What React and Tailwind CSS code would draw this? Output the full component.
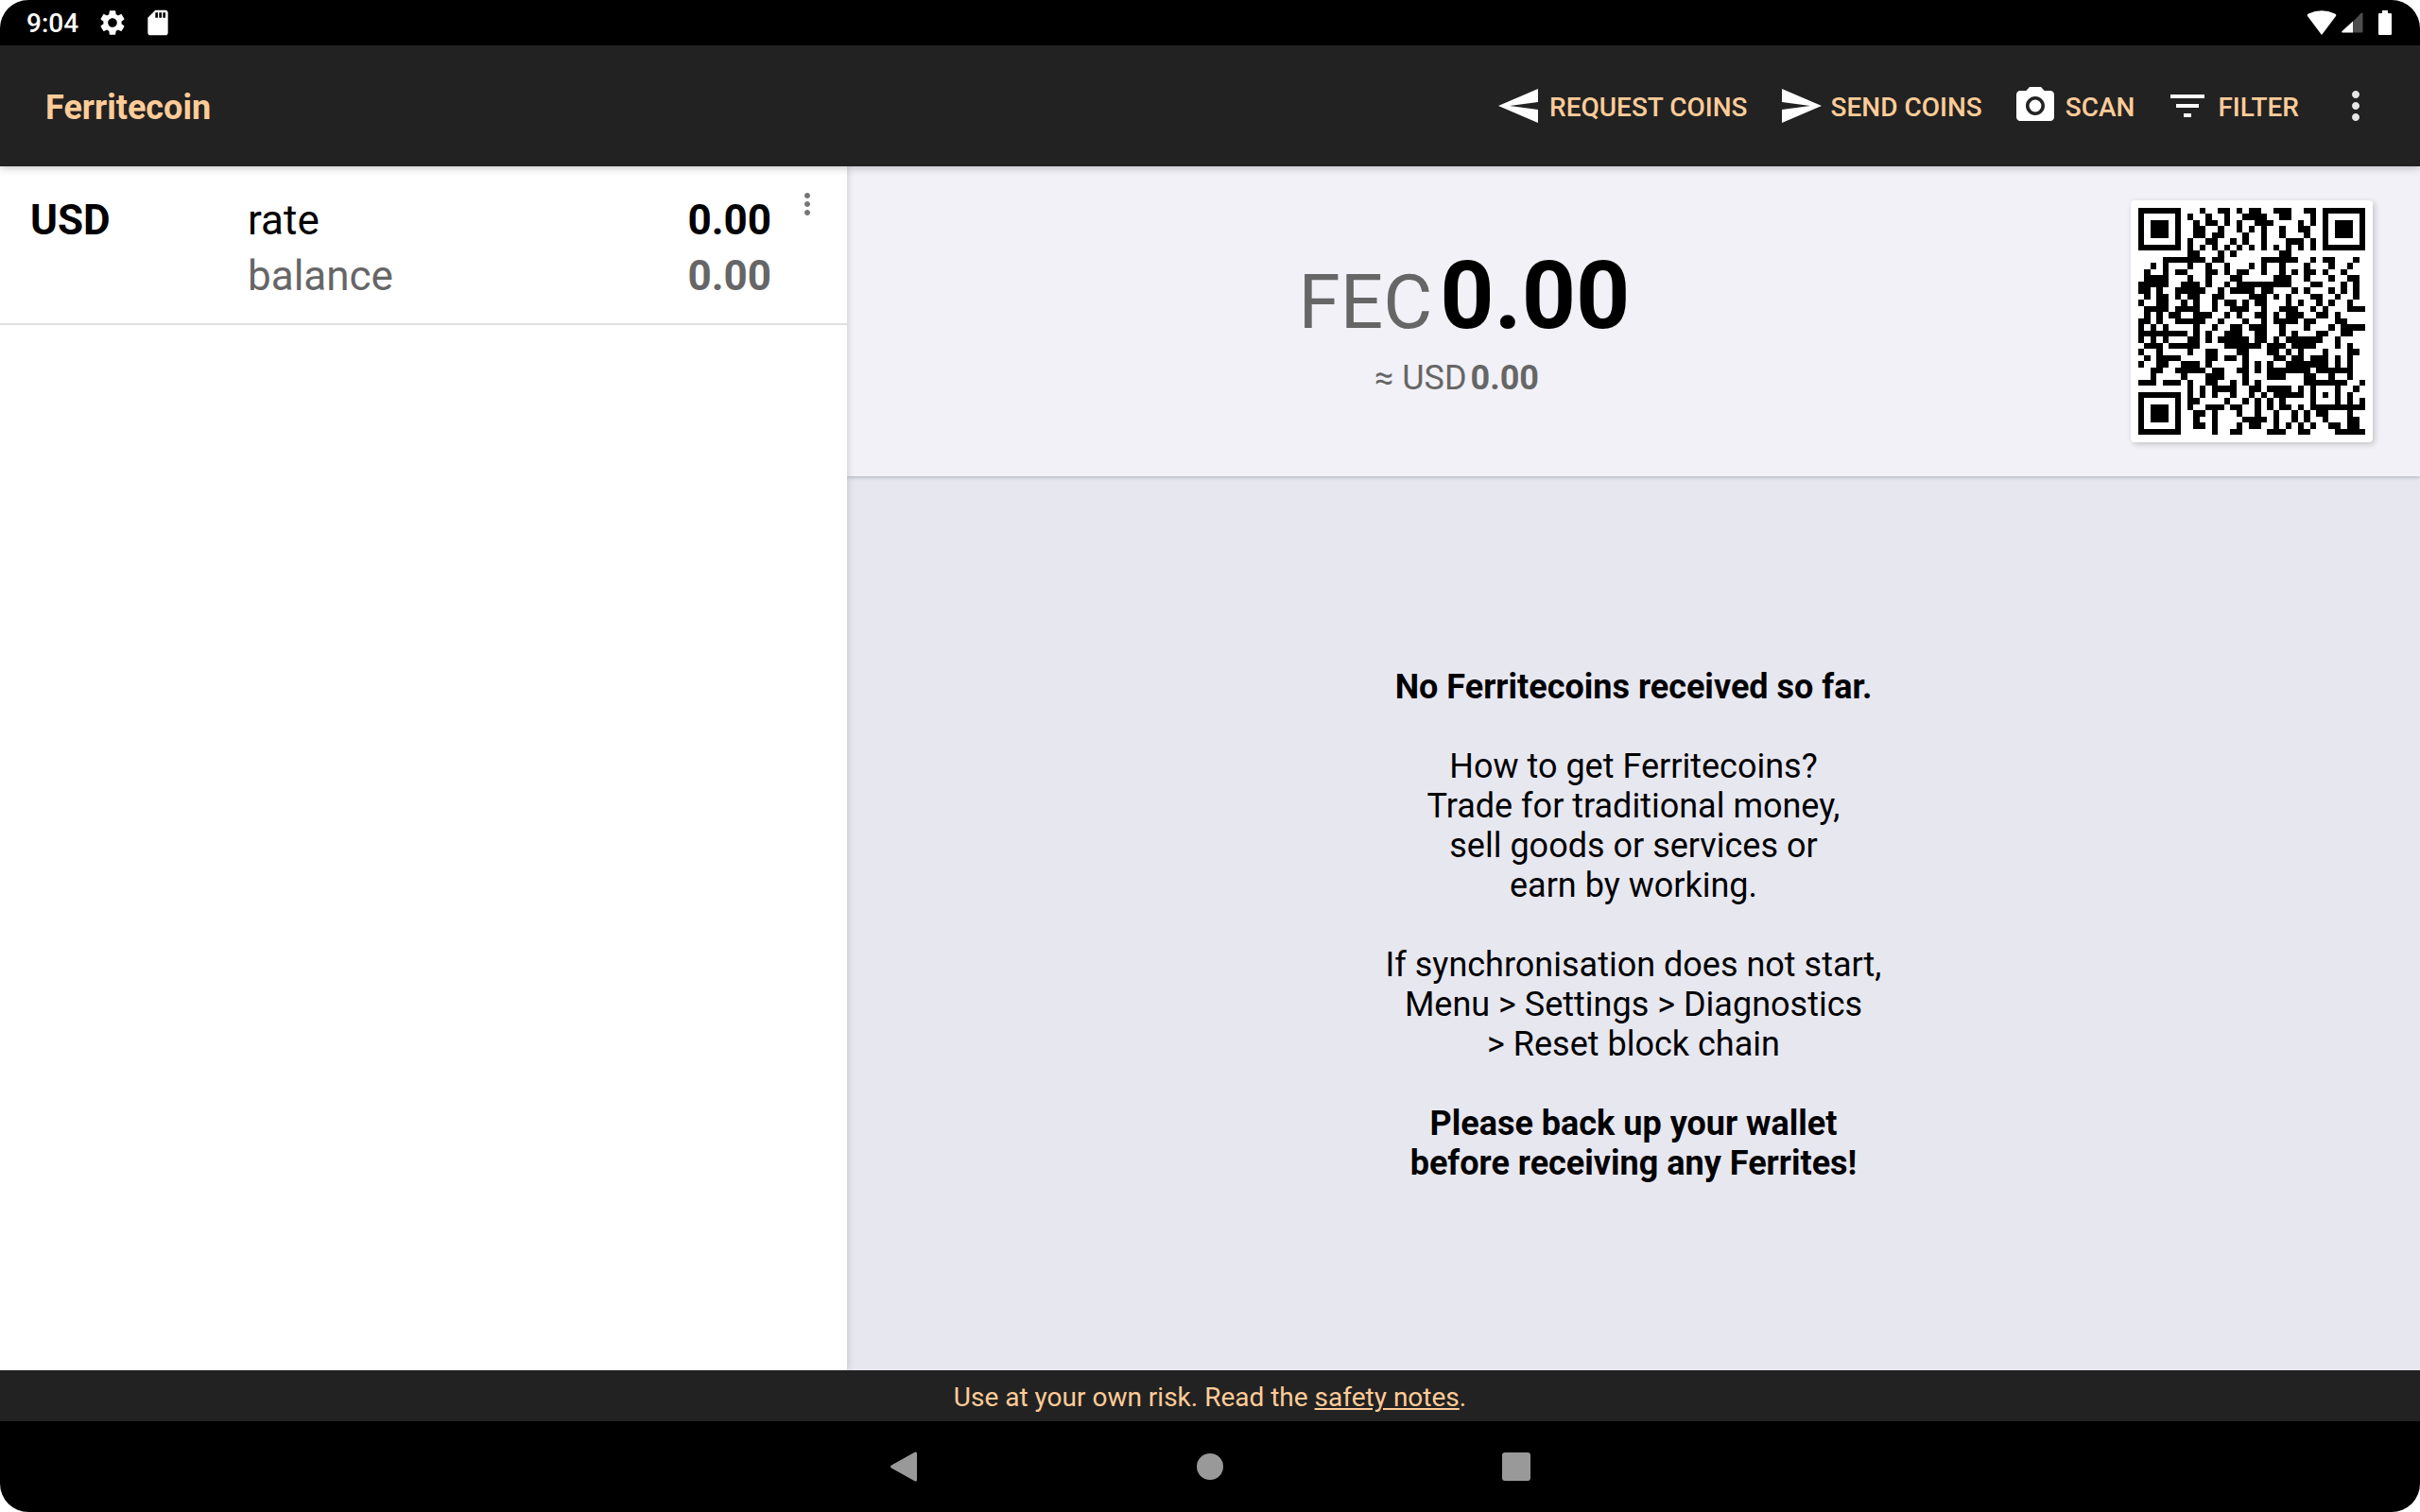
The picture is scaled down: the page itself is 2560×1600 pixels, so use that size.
import React from "react";

// Dark modules of the address code, one line per row, as column ranges.
const QR_ROWS = [
  "0-6 10 13-14 16 18-19 22-24 27-28 30-36",
  "0 6 8 11 14 17-20 23-24 28 30 36",
  "0 2-4 6 9 11-12 14 16 19-21 26 28 30 32-34 36",
  "0 2-4 6 9-10 13 16 18 20 23 26-27 30 32-34 36",
  "0 2-4 6 9-10 12-13 17 20 23 27 30 32-34 36",
  "0 6 8 11-12 15 17 20 24-26 28 30 36",
  "0-6 8 10 12 14 16 18 20 22 24 26 28 30-36",
  "8-9 13 15 23-24",
  "4-10 12-13 20-25 28 30-31 35",
  "2 4 8 11 14 18 20 23 27 31 34",
  "1 4 6-7 11-12 14 16-17 20 23 25 27-28 30 33",
  "1-4 8 11 15-16 22-24 27 31 34-35",
  "0-4 7-9 11 14 16-24 28-29 33 35",
  "0-1 3 6-10 13 15-18 20-21 25 27 31 33 35",
  "1 3-4 6 8-9 12-13 18-20 22 24 28-29 32 35",
  "0 3-4 7 9 12 14-15 17 19-20 24 26 29 31 34",
  "1-4 6-9 12 15-17 20 23-25 28 30 34-36",
  "1 3 5-6 9-11 14 16 19-20 22 24-26 29-30 32",
  "0-1 3 6-10 13 17 20 22-25 27-28 32-33",
  "0 2 4 9 12 15-16 18-20 23 27 31 33-36",
  "0-7 9 11 14-16 19-20 23 25 29-30 33-34",
  "0 2 4 8-9 11 13-17 19-20 22 24-29 32",
  "1-3 5-9 14-19 21-23 25-28 32 34",
  "0 3 8 11-12 16-17 21-22 24 26 30 34-35",
  "1 3-6 11-12 14-15 17 22-23 25-26 28-30 32 34",
  "0 3-4 7-9 11 17 19 21 24-30 32 34",
  "2-3 6-10 12-13 16-17 19 21-27 29-34",
  "2 7 11-13 17 21-23 27-28 31 34",
  "0-2 4-6 8 11-12 15 17 19 27-33 36",
  "8 10 12-15 18-19 21-24 26 28 32 35",
  "0-6 8 10 12 15 18 20 22-26 28 30 32 34",
  "0 6 8-9 14 17 19 21 23 28 32 34 36",
  "0 2-4 6 8 11-13 15-16 19 21 23-24 26 28-36",
  "0 2-4 6 9-10 12 16 19 22 25 27 29-30 34",
  "0 2-4 6 9 12 17-20 22 25 27 30 34-35",
  "0 6 9-10 12 16 18-19 22 24 26 28 31-32 34-35",
  "0-6 12 15-16 21-23 26-27 32-36",
];

const qrPath = QR_ROWS.map((row, y) =>
  row
    .split(" ")
    .map((range) => {
      const [from, to = from] = range.split("-").map(Number);
      return `M${from} ${y}h${to - from + 1}v1h${from - to - 1}z`;
    })
    .join("")
).join("");

function Icon({ d, className }) {
  return (
    <svg viewBox="0 0 24 24" fill="currentColor" className={className} aria-hidden="true">
      <path d={d} />
    </svg>
  );
}

const MORE =
  "M12 8c1.1 0 2-.9 2-2s-.9-2-2-2-2 .9-2 2 .9 2 2 2zm0 2c-1.1 0-2 .9-2 2s.9 2 2 2 2-.9 2-2-.9-2-2-2zm0 6c-1.1 0-2 .9-2 2s.9 2 2 2 2-.9 2-2-.9-2-2-2z";
const GEAR =
  "M19.14 12.94c.04-.3.06-.61.06-.94 0-.32-.02-.64-.07-.94l2.03-1.58c.18-.14.23-.41.12-.61l-1.92-3.32c-.12-.22-.37-.29-.59-.22l-2.39.96c-.5-.38-1.03-.7-1.62-.94l-.36-2.54c-.04-.24-.24-.41-.48-.41h-3.84c-.24 0-.43.17-.47.41l-.36 2.54c-.59.24-1.13.57-1.62.94l-2.39-.96c-.22-.08-.47 0-.59.22L2.74 8.87c-.12.21-.08.47.12.61l2.03 1.58c-.05.3-.09.63-.09.94s.02.64.07.94l-2.03 1.58c-.18.14-.23.41-.12.61l1.92 3.32c.12.22.37.29.59.22l2.39-.96c.5.38 1.03.7 1.62.94l.36 2.54c.05.24.24.41.48.41h3.84c.24 0 .44-.17.47-.41l.36-2.54c.59-.24 1.13-.56 1.62-.94l2.39.96c.22.08.47 0 .59-.22l1.92-3.32c.12-.22.07-.47-.12-.61l-2.01-1.58zM12 15.6c-1.98 0-3.6-1.62-3.6-3.6s1.62-3.6 3.6-3.6 3.6 1.62 3.6 3.6-1.62 3.6-3.6 3.6z";

const ACTIONS = [
  { label: "REQUEST COINS", d: "M21.99 3L1 12l20.99 9L22 14l-15-2 15-2z" },
  { label: "SEND COINS", d: "M2.01 21L23 12 2.01 3 2 10l15 2-15 2z" },
  {
    label: "SCAN",
    d: "M12 8.8a3.2 3.2 0 1 0 0 6.4 3.2 3.2 0 0 0 0-6.4zM9 2L7.17 4H4c-1.1 0-2 .9-2 2v12c0 1.1.9 2 2 2h16c1.1 0 2-.9 2-2V6c0-1.1-.9-2-2-2h-3.17L15 2H9zm3 15c-2.76 0-5-2.24-5-5s2.24-5 5-5 5 2.24 5 5-2.24 5-5 5z",
  },
  { label: "FILTER", d: "M10 18h4v-2h-4v2zM3 6v2h18V6H3zm3 7h12v-2H6v2z" },
];

function StatusBar() {
  return (
    <div className="flex h-12 shrink-0 items-center justify-between bg-black pr-[30px] pl-7 text-white">
      <div className="flex items-center">
        <span className="pt-0.5 text-[28px] leading-8 font-medium">9:04</span>
        <Icon d={GEAR} className="ml-5 size-8" />
        <Icon
          d="M18 2h-8L4 8v12c0 1.100.9 2 2 2h12c1.100 0 2-.9 2-2V4c0-1.100-.9-2-2-2zm-6 6h-2V4h2v4zm3 0h-2V4h2v4zm3 0h-2V4h2v4z"
          className="ml-4 size-8"
        />
      </div>
      <div className="flex items-center">
        <svg viewBox="0 0 32 28" className="h-7 w-8" fill="currentColor" aria-hidden="true">
          <path d="M16 27L1 7Q0 5.500 2 4.500Q16-2 30 4.500Q32 5.500 31 7z" />
        </svg>
        <svg viewBox="0 0 24 24" className="ml-1 size-6" fill="currentColor" aria-hidden="true">
          <path d="M23.500 2v19.500a1 1 0 0 1-1 1H13V11L21.500 2q2-1 2 0z" opacity=".3" />
          <path d="M13 10.500v12H2.500q-2 0-1-1.500z" />
        </svg>
        <svg viewBox="0 0 14 26" className="ml-4 h-[26px] w-[14px]" fill="currentColor" aria-hidden="true">
          <path d="M4 0h6v3h3q1 0 1 1v21q0 1-1 1H1q-1 0-1-1V4q0-1 1-1h3z" />
        </svg>
      </div>
    </div>
  );
}

function AppBar() {
  return (
    <header className="relative z-20 flex h-32 shrink-0 items-center justify-between bg-[#222222] pr-11 pl-12 text-[#ffcc99] shadow-[0_2px_8px_rgba(0,0,0,0.22)]">
      <h1 className="pt-1 text-[36px] leading-[42px] font-bold">Ferritecoin</h1>
      <div className="flex items-center gap-5">
        <nav className="flex items-center gap-8">
          {ACTIONS.map((a) => (
            <button key={a.label} type="button" className="flex items-center gap-2 text-[28px] leading-8 font-medium">
              <Icon d={a.d} className="size-12 text-white" />
              <span className="pt-1">{a.label}</span>
            </button>
          ))}
        </nav>
        <button type="button" aria-label="More options" className="ml-4 text-[#e6e6e6]">
          <Icon d={MORE} className="size-12" />
        </button>
      </div>
    </header>
  );
}

function RatesPane() {
  return (
    <aside className="relative z-10 w-[35%] shrink-0 bg-white shadow-[2px_0_6px_rgba(0,0,0,0.12)]">
      <div className="flex items-start border-b-2 border-[#dfdfdf] pt-[22px] pr-6 pb-5 pl-8 text-[44px] leading-[59px]">
        <div className="w-[230px] pt-1.5 font-bold text-black">USD</div>
        <dl className="grid flex-1 grid-cols-[1fr_auto] pt-1.5">
          <dt className="text-black">rate</dt>
          <dd className="font-bold text-black">0.00</dd>
          <dt className="text-[#666666]">balance</dt>
          <dd className="font-bold text-[#666666]">0.00</dd>
        </dl>
        <button type="button" aria-label="USD options" className="ml-5 text-[#757575]">
          <Icon d={MORE} className="size-9" />
        </button>
      </div>
    </aside>
  );
}

function BalanceHeader() {
  return (
    <section className="relative flex items-center bg-[#f2f1f7] py-9 pr-[50px] shadow-[0_1px_4px_rgba(0,0,0,0.25)]">
      <div className="flex flex-1 flex-col items-center pt-3">
        <div className="flex items-baseline gap-2 leading-[100px]">
          <span className="text-[80px] text-[#666666]">FEC</span>
          <span className="text-[100px] font-bold text-black">0.00</span>
        </div>
        <div className="flex items-baseline gap-1 pr-4 text-[36px] leading-[60px] text-[#666666]">
          <span>≈ USD</span>
          <span className="font-bold">0.00</span>
        </div>
      </div>
      <button
        type="button"
        aria-label="Show address code"
        className="ml-[52px] size-64 rounded bg-white p-2 shadow-[2px_2px_6px_rgba(0,0,0,0.2)]"
      >
        <svg viewBox="0 0 37 37" className="size-full" shapeRendering="crispEdges" aria-hidden="true">
          <path d={qrPath} />
        </svg>
      </button>
    </section>
  );
}

function EmptyMessage() {
  return (
    <section className="flex flex-1 items-center justify-center bg-[#e7e7f0] pt-1">
      <div className="flex flex-col gap-[42px] text-center text-[36px] leading-[42px] text-black">
        <p className="font-bold">No Ferritecoins received so far.</p>
        <p>
          How to get Ferritecoins?
          <br />
          Trade for traditional money,
          <br />
          sell goods or services or
          <br />
          earn by working.
        </p>
        <p>
          If synchronisation does not start,
          <br />
          Menu &gt; Settings &gt; Diagnostics
          <br />
          &gt; Reset block chain
        </p>
        <p className="font-bold">
          Please back up your wallet
          <br />
          before receiving any Ferrites!
        </p>
      </div>
    </section>
  );
}

function SystemNav() {
  return (
    <nav className="flex h-24 shrink-0 items-center justify-center bg-black text-[#999999]">
      <button type="button" aria-label="Back" className="flex w-[324px] justify-center">
        <svg viewBox="0 0 28 32" className="h-8 w-7" fill="currentColor" aria-hidden="true">
          <path d="M26 .5L1 14.500q-2 1.500 0 3L26 31.500q2 .5 2-1.500V2q0-2-2-1.500z" />
        </svg>
      </button>
      <button type="button" aria-label="Home" className="flex w-[324px] justify-center">
        <span className="size-7 rounded-full bg-[#999999]" />
      </button>
      <button type="button" aria-label="Recent apps" className="flex w-[324px] justify-center">
        <span className="size-[30px] rounded-[3px] bg-[#999999]" />
      </button>
    </nav>
  );
}

export default function App() {
  return (
    <div className="bg-white font-['Roboto',sans-serif]">
      <div className="flex min-h-screen flex-col overflow-hidden rounded-[30px]">
        <StatusBar />
        <AppBar />
        <main className="flex flex-1">
          <RatesPane />
          <div className="flex flex-1 flex-col">
            <BalanceHeader />
            <EmptyMessage />
          </div>
        </main>
        <footer className="relative z-20 shrink-0 bg-[#222222] pt-[13px] pb-[9px] text-center text-[28px] leading-8 text-[#ffcc99]">
          Use at your own risk. Read the{" "}
          <a href="#safety" className="underline">
            safety notes
          </a>
          .
        </footer>
        <SystemNav />
      </div>
    </div>
  );
}
